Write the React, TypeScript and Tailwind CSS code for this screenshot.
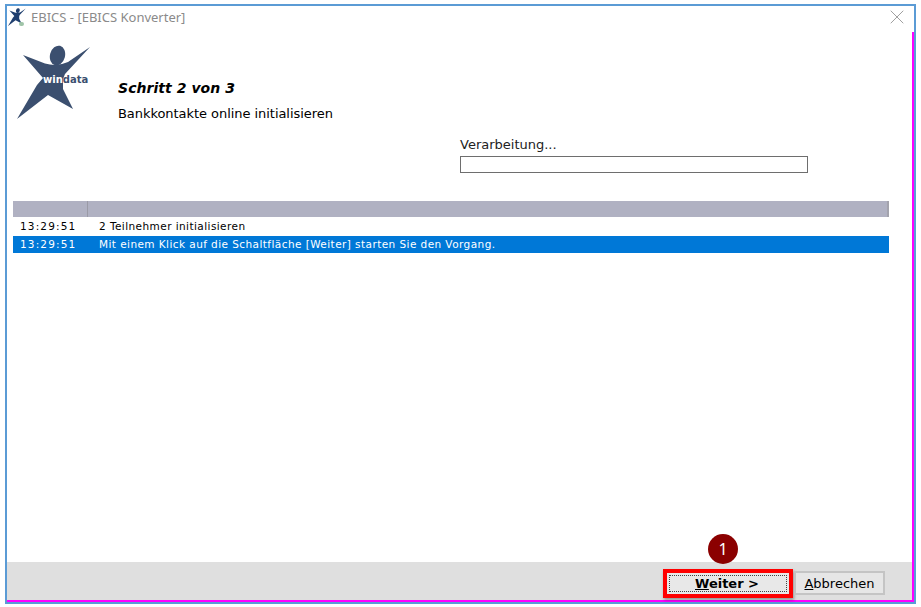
import { X } from "lucide-react"

const rows = [
  { time: "13:29:51", text: "2 Teilnehmer initialisieren", active: false },
  {
    time: "13:29:51",
    text: "Mit einem Klick auf die Schaltfläche [Weiter] starten Sie den Vorgang.",
    active: true,
  },
]

function Figure({ className, fill }: { className: string; fill: string }) {
  return (
    <svg viewBox="0 0 74 74" className={className}>
      <ellipse cx="40.5" cy="10.5" rx="7.5" ry="10" transform="rotate(15 40.5 10.5)" fill={fill} />
      <path
        d="M6 10 L28 18.5 Q40 22 51 17 L73 2 L48 29 L46 34 L46 44 L56 64 L31 50 L0 74 L20 40 L26 33 Z"
        fill={fill}
      />
    </svg>
  )
}

export default function App() {
  return (
    <div className="w-[921px] h-[607px] bg-white pt-1 pl-[5px] font-['DejaVu_Sans',sans-serif] text-black relative">
      <div className="w-[911px] h-[600px] border-2 border-[#5b9bd5] flex flex-col">
        <div className="h-[26px] flex items-start pt-[2px] pl-[1px] pr-[5px] shrink-0">
          <div className="relative w-[18px] h-[18px]">
            <Figure className="w-[18px] h-[18px]" fill="#1f3f6f" />
            <div className="absolute right-[2px] bottom-0 w-[5px] h-[4px] rounded-sm bg-[#9fc4a8]" />
          </div>
          <span className="ml-[5px] text-[13px] leading-[18px] text-[#8a8a8a] font-['Noto_Sans',sans-serif]">
            EBICS - [EBICS Konverter]
          </span>
          <X className="ml-auto -mt-[3px] text-[#a0a0a0]" size={24} strokeWidth={1} />
        </div>

        <div className="flex-1 flex flex-col border-r-2 border-b-2 border-[#ff00ff] min-h-0">
          <div className="flex-1 min-h-0">
            <div className="h-[169px] flex">
              <div className="relative w-[74px] h-[74px] ml-[10px] mt-[13px] shrink-0">
                <Figure className="w-[74px] h-[74px]" fill="#3b4f6f" />
                <span className="absolute left-[26px] top-[29px] text-[10px] leading-[12px] font-bold text-white whitespace-nowrap">
                  win<span className="text-[#3b4f6f]">data</span>
                </span>
              </div>
              <div className="ml-[27px] w-[342px] shrink-0 pt-[47px]">
                <div className="text-[14px] leading-[18px] font-bold italic tracking-[0.05px]">
                  Schritt 2 von 3
                </div>
                <div className="mt-[9px] text-[13px] leading-[16px] tracking-[-0.05px]">
                  Bankkontakte online initialisieren
                </div>
              </div>
              <div className="pt-[105px] w-[348px]">
                <div className="text-[13px] leading-[16px] text-[#222]">Verarbeitung...</div>
                <div className="mt-[3px] h-[17px] border border-[#6e6e6e] bg-white" />
              </div>
            </div>

            <div className="ml-[6px] w-[876px]">
              <div className="h-[16px] flex bg-[#b0b1c2] border-r-2 border-[#a3a3ad]">
                <div className="w-[75px] border-r border-[#9a9aa6]" />
              </div>
              <div className="mt-[1px]">
                {rows.map((row) => (
                  <div
                    key={row.text}
                    className={
                      row.active
                        ? "h-[17px] flex items-center bg-[#0078d7] text-white text-[10.5px]"
                        : "h-[18px] flex items-center text-black text-[10.5px]"
                    }
                  >
                    <span className="w-[86px] pl-[7px] shrink-0 tracking-[1.15px]">{row.time}</span>
                    <span className="tracking-[0.43px]">{row.text}</span>
                  </div>
                ))}
              </div>
            </div>
          </div>

          <div className="h-[38px] bg-[#dfdfdf] flex justify-end items-start shrink-0 pr-[27px] pt-[7px]">
            <div className="w-[130px] h-[29px] flex border-[4px] border-[#ff0000] bg-[#e8e8e8] shadow-[1px_2px_3px_rgba(0,0,0,0.35)] p-[2px]">
              <button
                type="button"
                className="flex-1 border border-dotted border-[#444] text-[13px] font-bold leading-none pr-[2px]"
              >
                <span className="underline">W</span>eiter &gt;
              </button>
            </div>
            <button
              type="button"
              className="ml-[1px] w-[91px] h-[24px] mt-[2px] bg-[#e6e6e6] border-2 border-[#c4c4c4] text-[13px] leading-none"
            >
              <span className="underline">A</span>bbrechen
            </button>
          </div>
        </div>
      </div>

      <div className="absolute left-[708px] top-[534px] w-[30px] h-[30px] rounded-full bg-[#8b0000] text-white text-[16px] flex items-center justify-center font-['Noto_Sans',sans-serif]">
        1
      </div>
    </div>
  )
}
